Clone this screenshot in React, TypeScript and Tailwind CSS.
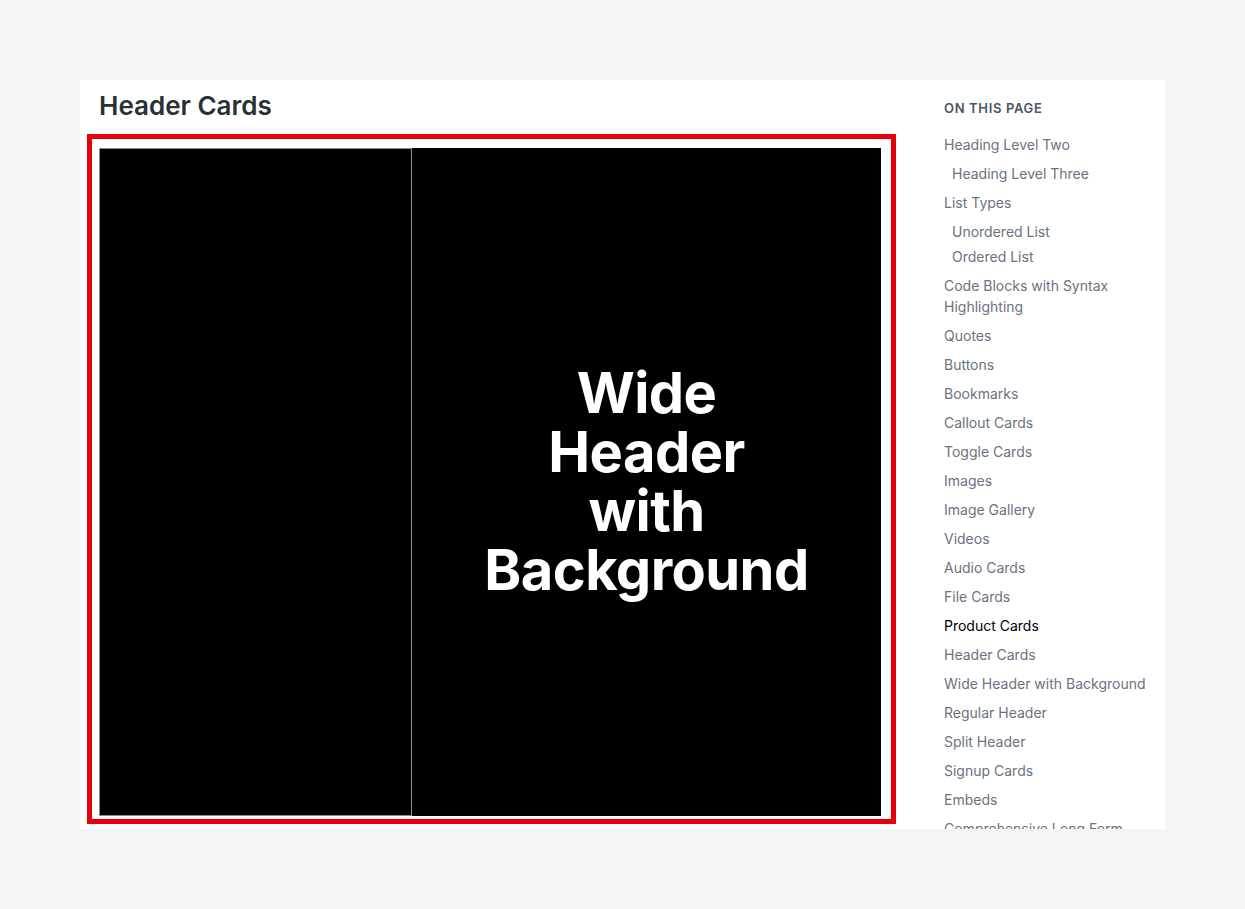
const toc: { label: string; sub?: boolean; active?: boolean; gap?: string }[] = [
  { label: 'Heading Level Two' },
  { label: 'Heading Level Three', sub: true },
  { label: 'List Types' },
  { label: 'Unordered List', sub: true },
  { label: 'Ordered List', sub: true, gap: 'mt-[4px]' },
  { label: 'Code Blocks with Syntax Highlighting' },
  { label: 'Quotes' },
  { label: 'Buttons' },
  { label: 'Bookmarks' },
  { label: 'Callout Cards' },
  { label: 'Toggle Cards' },
  { label: 'Images' },
  { label: 'Image Gallery' },
  { label: 'Videos' },
  { label: 'Audio Cards' },
  { label: 'File Cards' },
  { label: 'Product Cards', active: true },
  { label: 'Header Cards' },
  { label: 'Wide Header with Background' },
  { label: 'Regular Header' },
  { label: 'Split Header' },
  { label: 'Signup Cards' },
  { label: 'Embeds' },
  { label: 'Comprehensive Long Form' },
]

export default function App() {
  return (
    <div className="min-h-screen bg-[#f3f4f6] pt-[80px] pl-[80px] font-['Inter',sans-serif]">
      <div className="flex w-[1085px] h-[749px] overflow-hidden bg-white">
        {/* main column */}
        <main className="w-[816px] shrink-0">
          <h1 className="pl-[19px] pt-[10px] text-[26px] leading-[32px] font-semibold text-[#263238]">
            Header Cards
          </h1>
          <div className="ml-[7px] mt-[12px] w-[809px] h-[690px] border-[5px] border-[#e5000b] pl-[7px] pr-[10px] pt-[9px] pb-[3px]">
            <div className="flex h-full bg-black">
              <div className="w-[313px] shrink-0 border border-[#8c8c8c]" />
              <div className="flex-1 flex items-center justify-center">
                <h2 className="text-center text-white font-bold text-[56px] leading-[59px] tracking-[-0.01em]">
                  Wide
                  <br />
                  Header
                  <br />
                  with
                  <br />
                  Background
                </h2>
              </div>
            </div>
          </div>
        </main>

        {/* on this page */}
        <aside className="ml-[48px] w-[221px] pt-[18px]">
          <div className="text-[13px] leading-[20px] font-semibold tracking-[0.05em] text-[#4b5563] uppercase">
            On this page
          </div>
          <ul className="mt-[16px] text-[14px] leading-[21px]">
            {toc.map((item, i) => (
              <li
                key={item.label}
                className={`${i === 0 ? '' : item.gap ?? 'mt-[8px]'} ${item.sub ? 'pl-[8px]' : ''} ${
                  item.active ? 'text-black' : 'text-[#6b7280]'
                }`}
              >
                {item.label}
              </li>
            ))}
          </ul>
        </aside>
      </div>
    </div>
  )
}
